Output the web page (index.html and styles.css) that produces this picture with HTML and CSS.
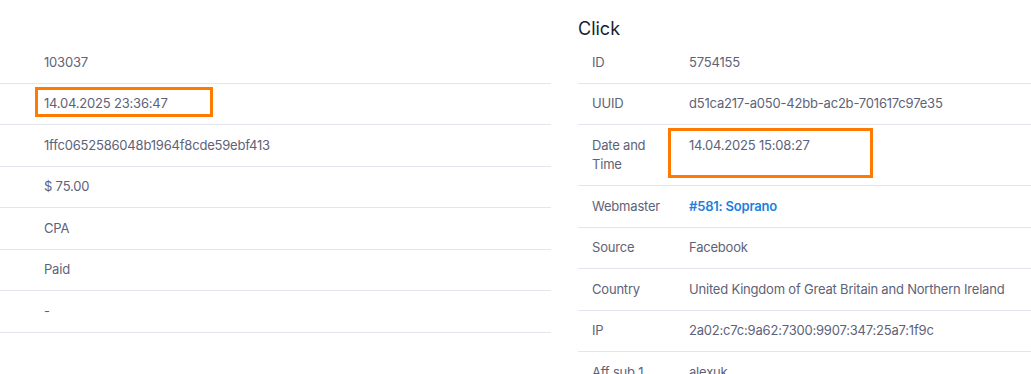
FILE: index.html
```html
<!DOCTYPE html>
<html lang="en">
<head>
<meta charset="utf-8">
<title>Conversion details</title>
<link rel="stylesheet" href="styles.css">
</head>
<body>
<div class="page">
  <section class="panel panel-left">
    <h3 class="panel-title">&nbsp;</h3>
    <div class="table">
      <div class="row"><div class="label"></div><div class="value">103037</div></div>
      <div class="row"><div class="label"></div><div class="value"><span class="mark mark-left"></span>14.04.2025 23:36:47</div></div>
      <div class="row"><div class="label"></div><div class="value">1ffc0652586048b1964f8cde59ebf413</div></div>
      <div class="row"><div class="label"></div><div class="value">$ 75.00</div></div>
      <div class="row"><div class="label"></div><div class="value">CPA</div></div>
      <div class="row"><div class="label"></div><div class="value">Paid</div></div>
      <div class="row"><div class="label"></div><div class="value">-</div></div>
    </div>
  </section>
  <section class="panel panel-right">
    <h3 class="panel-title">Click</h3>
    <div class="table">
      <div class="row"><div class="label">ID</div><div class="value">5754155</div></div>
      <div class="row"><div class="label">UUID</div><div class="value">d51ca217-a050-42bb-ac2b-701617c97e35</div></div>
      <div class="row"><div class="label">Date and Time</div><div class="value"><span class="mark mark-right"></span>14.04.2025 15:08:27</div></div>
      <div class="row"><div class="label">Webmaster</div><div class="value"><a class="link" href="#">#581: Soprano</a></div></div>
      <div class="row"><div class="label">Source</div><div class="value">Facebook</div></div>
      <div class="row"><div class="label">Country</div><div class="value">United Kingdom of Great Britain and Northern Ireland</div></div>
      <div class="row"><div class="label">IP</div><div class="value">2a02:c7c:9a62:7300:9907:347:25a7:1f9c</div></div>
      <div class="row"><div class="label">Aff sub 1</div><div class="value">alexuk</div></div>
    </div>
  </section>
</div>
</body>
</html>
```
FILE: styles.css
```css
html, body {
  margin: 0;
  padding: 0;
  background: #ffffff;
  overflow: hidden;
}
body {
  font-family: Inter, "Liberation Sans", sans-serif;
  font-size: 13px;
  line-height: 19.5px;
  letter-spacing: -0.2px;
  color: #5e6278;
}
.page {
  display: flex;
  gap: 27px;
  padding-top: 16px;
}
.panel-left {
  width: 551px;
  flex: none;
}
.panel-right {
  flex: 1;
  min-width: 0;
}
.panel-title {
  margin: 0;
  height: 26px;
  font-size: 18px;
  line-height: 26px;
  font-weight: 400;
  letter-spacing: 0;
  color: #181c32;
}
.table {
  display: flex;
  flex-direction: column;
}
.row {
  display: grid;
  border-bottom: 1px solid #e4e6ef;
}
.panel-right .row {
  grid-template-columns: 97px 1fr;
}
.panel-left .row {
  grid-template-columns: 30px 1fr;
}
.label, .value {
  padding: 10.5px 0 10.5px 14px;
}
.value {
  position: relative;
}
.link {
  color: #1b7fe0;
  font-weight: 600;
  text-decoration: none;
}
.mark {
  position: absolute;
  border: 3px solid #ff7a00;
  box-sizing: border-box;
}
.mark-left {
  left: 5px;
  top: 3px;
  width: 178px;
  height: 30px;
}
.mark-right {
  left: -7px;
  top: 3px;
  width: 205px;
  height: 50px;
}
```
